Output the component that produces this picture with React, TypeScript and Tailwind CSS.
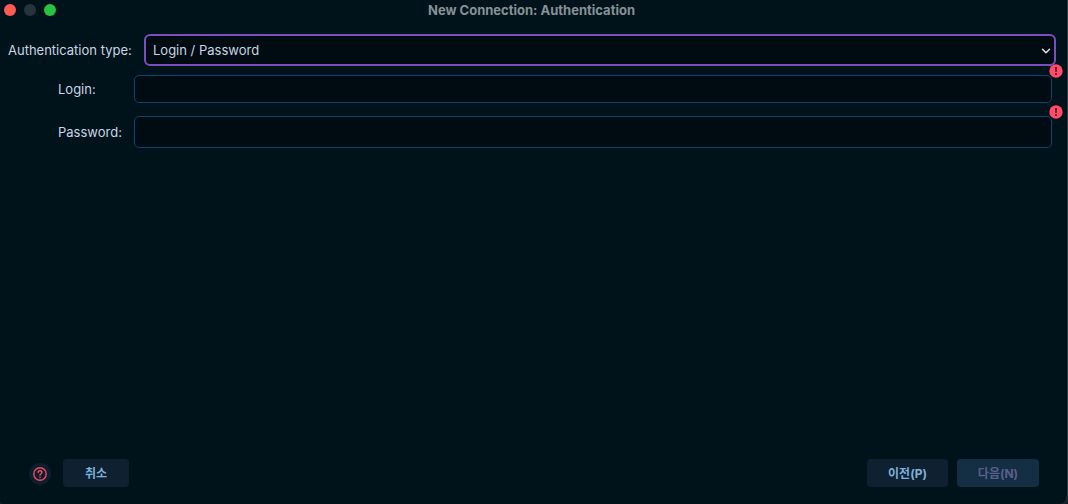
import type { ReactNode } from "react";
import { ChevronDown } from "lucide-react";

function ErrorBadge() {
  return (
    <svg viewBox="0 0 14 14" className="absolute -top-[11px] -right-[11px] size-3.5" role="img" aria-label="Required">
      <circle cx="7" cy="7" r="6.7" fill="#ff4d68" />
      <path d="M5.900 3h2.200l-.3 5H6.200z" fill="#7a1830" />
      <rect x="6" y="9" width="2" height="2" rx=".5" fill="#7a1830" />
    </svg>
  );
}

function Field({ id, label, children }: { id: string; label: string; children: ReactNode }) {
  return (
    <div className="flex items-center">
      <label htmlFor={id} className="w-[76px] shrink-0">
        {label}
      </label>
      <div className="relative flex flex-1">
        {children}
        <ErrorBadge />
      </div>
    </div>
  );
}

export default function App() {
  return (
    <div className="min-h-screen bg-[#1b1d20] font-['Inter','Noto_Sans_CJK_KR',sans-serif] text-[13px] leading-5 text-[#cbd5e4]">
      <main className="flex min-h-screen flex-col rounded-br-lg rounded-bl-sm border-r border-[#33404a] bg-[#00131b]">
        <header className="grid h-5 grid-cols-[1fr_auto_1fr] items-center pr-2 pl-1">
          <div className="flex gap-2">
            <button type="button" aria-label="Close" className="size-3 rounded-full bg-[#ff5a52]" />
            <button type="button" aria-label="Minimize" className="size-3 rounded-full bg-[#27343d]" />
            <button type="button" aria-label="Zoom" className="size-3 rounded-full bg-[#2ac241]" />
          </div>
          <h1 className="font-bold text-[#879196]">New Connection: Authentication</h1>
        </header>

        <form className="flex flex-1 flex-col">
          <div className="mt-3.5 flex items-center pr-[11px] pl-2">
            <label htmlFor="auth-type" className="w-[136px] shrink-0">
              Authentication type:
            </label>
            <div className="relative flex flex-1">
              <select
                id="auth-type"
                className="h-8 w-full appearance-none rounded-md border-2 border-[#7a4fbd] bg-[#000c11] px-[7px] outline-none"
              >
                <option>Login / Password</option>
              </select>
              <ChevronDown className="pointer-events-none absolute top-2.5 right-[3px] size-3.5 text-[#dfe6f2]" strokeWidth={2.5} />
            </div>
          </div>

          <div className="mt-[9px] flex flex-col gap-[13px] pr-[15px] pl-[58px]">
            <Field id="login" label="Login:">
              <input id="login" type="text" className="h-7 w-full rounded-[5px] border border-[#0d4271] bg-[#000c11] px-2 outline-none" />
            </Field>
            <Field id="password" label="Password:">
              <input id="password" type="password" className="h-8 w-full rounded-[5px] border border-[#0d4271] bg-[#000c11] px-2 outline-none" />
            </Field>
          </div>

          <footer className="mt-auto flex items-end pr-7 pb-[17px] pl-[29px] text-xs font-bold">
            <button type="button" aria-label="Help" className="mb-0.5 flex size-[22px] items-center justify-center rounded-full bg-[#0d1e2d]">
              <svg viewBox="0 0 14 14" className="size-3.5" fill="none" stroke="#f04863" strokeWidth="1.4" strokeLinecap="round">
                <circle cx="7" cy="7" r="6.2" />
                <path d="M5.2 5.5c0-2.3 3.7-2.3 3.7 0C8.900 6.800 7 6.800 7 8.200" />
                <path d="M7 10.300v.1" />
              </svg>
            </button>
            <button type="button" className="ml-3 h-7 w-[66px] rounded bg-[#0f2031] pt-0.5 text-[#7db1d9]">
              취소
            </button>
            <button type="button" className="ml-auto h-7 w-[81px] rounded bg-[#0f2031] pt-0.5 text-[#7db1d9]">
              이전(P)
            </button>
            <button type="button" disabled className="ml-[9px] h-7 w-[82px] rounded bg-[#142e44] pt-0.5 text-[#5a608b]">
              다음(N)
            </button>
          </footer>
        </form>
      </main>
    </div>
  );
}
